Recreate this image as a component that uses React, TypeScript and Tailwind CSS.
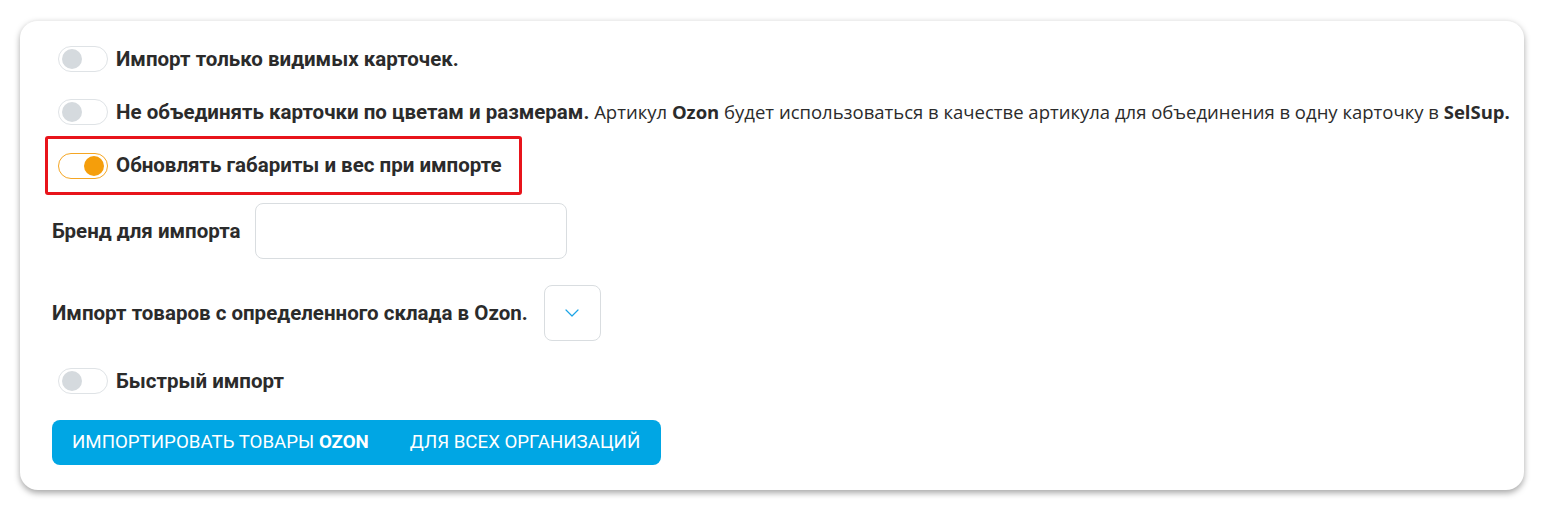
import { ChevronDown } from "lucide-react";

type ToggleProps = { on?: boolean };

const Toggle = ({ on = false }: ToggleProps) => (
  <span
    className={`flex h-[26px] w-[50px] shrink-0 items-center rounded-full border bg-white px-[3px] ${
      on ? "justify-end border-[#f5a623]" : "justify-start border-[#dfe3e6]"
    }`}
  >
    <span
      className={`h-[20px] w-[20px] rounded-full ${on ? "bg-[#f59e0b]" : "bg-[#d5dade]"}`}
    />
  </span>
);

const labelCls = "whitespace-nowrap font-['Roboto',sans-serif] text-[20.5px] font-bold text-[#2b2b2b]";

export default function App() {
  return (
    <div className="min-h-screen bg-white p-5 font-['Open_Sans',sans-serif]">
      <div className="flex h-[470px] flex-col rounded-[18px] border-t border-[#eeeeee] bg-white px-8 pt-[24px] shadow-[0_3px_6px_rgba(0,0,0,0.35)]">
        {/* switches */}
        <label className="ml-[6px] flex h-[28px] items-center gap-2">
          <Toggle />
          <span className={labelCls}>Импорт только видимых карточек.</span>
        </label>

        <label className="ml-[6px] mt-[25px] flex h-[28px] items-center gap-2">
          <Toggle />
          <span className="whitespace-nowrap text-[18.5px] text-[#2b2b2b]">
            <span className={labelCls}>Не объединять карточки по цветам и размерам.</span>{" "}
            Артикул <b className="font-bold">Ozon</b> будет использоваться в качестве артикула для
            объединения в одну карточку в <b className="font-bold">SelSup.</b>
          </span>
        </label>

        <div className="-ml-[7px] mt-[10px] flex h-[59px] w-[477px] items-center gap-2 rounded-[3px] border-[3px] border-[#e8141b] pl-[10px]">
          <Toggle on />
          <span className={labelCls}>Обновлять габариты и вес при импорте</span>
        </div>

        {/* brand */}
        <div className="mt-[8px] flex items-center gap-[14px]">
          <span className={labelCls}>Бренд для импорта</span>
          <input className="h-[56px] w-[312px] rounded-[8px] border border-[#d9dde0] bg-white px-3 outline-none" />
        </div>

        {/* warehouse */}
        <div className="mt-[26px] flex items-center gap-[16px]">
          <span className={labelCls}>Импорт товаров с определенного склада в Ozon.</span>
          <button className="flex h-[56px] w-[57px] items-center justify-center rounded-[8px] border border-[#d9dde0] bg-white">
            <ChevronDown className="h-[24px] w-[24px] text-[#1ba4e6]" strokeWidth={1.2} />
          </button>
        </div>

        <label className="ml-[6px] mt-[26px] flex h-[28px] items-center gap-2">
          <Toggle />
          <span className={labelCls}>Быстрый импорт</span>
        </label>

        <button className="mt-[25px] flex h-[45px] w-[609px] items-center gap-[41px] whitespace-nowrap rounded-[8px] bg-[#00a6e4] px-5 font-['Roboto',sans-serif] text-[18.7px] text-white uppercase">
          <span>
            Импортировать товары <b className="font-bold">Ozon</b>
          </span>
          <span>Для всех организаций</span>
        </button>
      </div>
    </div>
  );
}
